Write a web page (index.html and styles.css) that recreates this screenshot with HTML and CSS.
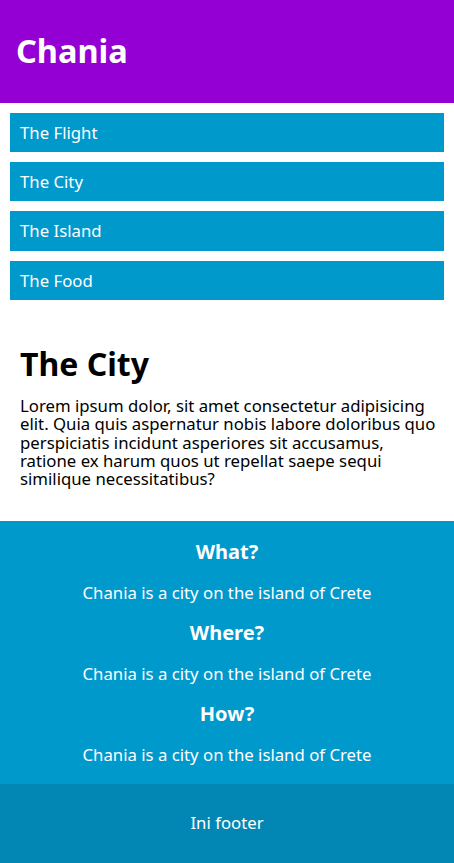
FILE: index.html
```html
<!DOCTYPE html>
<html lang="en">
<head>
<meta charset="utf-8">
<title>Chania</title>
<link rel="stylesheet" href="styles.css">
</head>
<body>
<header class="header">
  <h1 class="brand">Chania</h1>
</header>
<nav class="menu">
  <ul class="menu-list">
    <li class="menu-item">The Flight</li>
    <li class="menu-item">The City</li>
    <li class="menu-item">The Island</li>
    <li class="menu-item">The Food</li>
  </ul>
</nav>
<main class="content">
  <h1 class="title">The City</h1>
  <p class="text">Lorem ipsum dolor, sit amet consectetur adipisicing elit. Quia quis aspernatur nobis labore doloribus quo perspiciatis incidunt asperiores sit accusamus, ratione ex harum quos ut repellat saepe sequi similique necessitatibus?</p>
</main>
<aside class="facts">
  <h2 class="fact-title">What?</h2>
  <p class="fact-text">Chania is a city on the island of Crete</p>
  <h2 class="fact-title">Where?</h2>
  <p class="fact-text">Chania is a city on the island of Crete</p>
  <h2 class="fact-title">How?</h2>
  <p class="fact-text">Chania is a city on the island of Crete</p>
</aside>
<footer class="footer">
  <p class="footer-text">Ini footer</p>
</footer>
</body>
</html>
```
FILE: styles.css
```css
* { box-sizing: border-box; }

body {
  margin: 0;
  font-family: "Noto Sans", "Open Sans", sans-serif;
  font-size: 16.75px;
  color: #000;
  background: #fff;
}

.header {
  background: #9400d3;
  color: #fff;
  padding: 31px 16px 32px;
}

.brand {
  margin: 0;
  font-size: 32.5px;
  line-height: 40px;
  font-weight: 700;
}

.menu {
  padding: 10px 10px 0;
}

.menu-list {
  list-style: none;
  margin: 0;
  padding: 0;
  display: flex;
  flex-direction: column;
  gap: 9.9px;
}

.menu-item {
  background: #0099cc;
  color: #fff;
  height: 39.3px;
  line-height: 39.3px;
  padding: 0 10px;
}

.content {
  padding: 44px 10px 32.3px 20px;
}

.title {
  margin: 0 0 13px;
  font-size: 32px;
  line-height: 40px;
  font-weight: 700;
}

.text {
  margin: 0;
  line-height: 18.33px;
}

.facts {
  background: #0099cc;
  color: #fff;
  text-align: center;
  padding: 11.4px 10px 8.8px;
}

.fact-title {
  margin: 0;
  font-size: 20px;
  line-height: 39px;
  font-weight: 700;
}

.fact-text {
  margin: 1.5px 0 0;
  line-height: 40.43px;
}

.footer {
  background: #0287b4;
  color: #fff;
  text-align: center;
  padding: 27.2px 10px 27.8px;
}

.footer-text {
  margin: 0;
  line-height: 24px;
}
```
